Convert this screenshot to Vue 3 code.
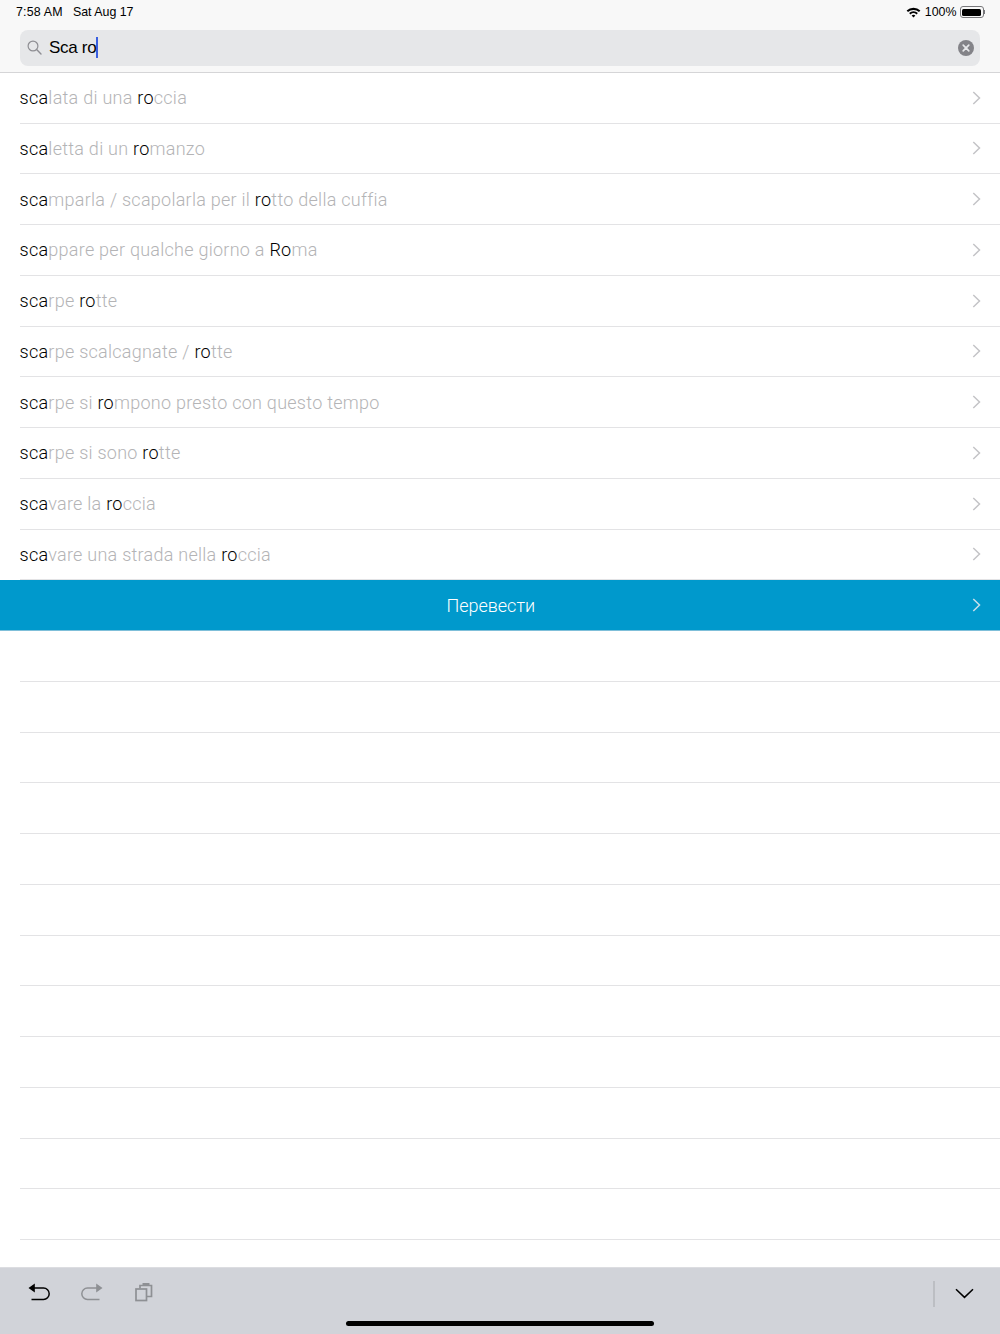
<script setup>
const rows = [
  [['sca', 1], ['lata di una ', 0], ['ro', 1], ['ccia', 0]],
  [['sca', 1], ['letta di un ', 0], ['ro', 1], ['manzo', 0]],
  [['sca', 1], ['mparla / scapolarla per il ', 0], ['ro', 1], ['tto della cuffia', 0]],
  [['sca', 1], ['ppare per qualche giorno a ', 0], ['Ro', 1], ['ma', 0]],
  [['sca', 1], ['rpe ', 0], ['ro', 1], ['tte', 0]],
  [['sca', 1], ['rpe scalcagnate / ', 0], ['ro', 1], ['tte', 0]],
  [['sca', 1], ['rpe si ', 0], ['ro', 1], ['mpono presto con questo tempo', 0]],
  [['sca', 1], ['rpe si sono ', 0], ['ro', 1], ['tte', 0]],
  [['sca', 1], ['vare la ', 0], ['ro', 1], ['ccia', 0]],
  [['sca', 1], ['vare una strada nella ', 0], ['ro', 1], ['ccia', 0]],
]
const emptyRows = 12
</script>

<template>
  <div class="screen">
    <header class="top">
      <div class="status">
        <span class="time">7:58 AM</span>
        <span class="date">Sat Aug 17</span>
        <span class="spacer"></span>
        <svg class="wifi" width="15" height="11" viewBox="0 0 15 11">
          <path d="M0.6 3.6 A10 10 0 0 1 14.4 3.6 L13 5.1 A8 8 0 0 0 2 5.1 Z" fill="#000" />
          <path d="M3.1 6.1 A6.4 6.4 0 0 1 11.9 6.1 L10.5 7.5 A4.4 4.4 0 0 0 4.5 7.5 Z" fill="#000" />
          <path d="M5.6 8.6 A2.8 2.8 0 0 1 9.4 8.6 L7.5 10.6 Z" fill="#000" />
        </svg>
        <span class="pct">100%</span>
        <span class="battery"><span class="battery-fill"></span></span>
        <span class="battery-tip"></span>
      </div>
      <div class="search">
        <svg class="glass" width="16" height="16" viewBox="0 0 16 16" fill="none" stroke="#8e8e93" stroke-width="1.2">
          <circle cx="6" cy="6" r="4.9" />
          <path d="M9.6 9.6 L14 14" stroke-linecap="round" stroke-width="1.4" />
        </svg>
        <span class="query">Sca ro</span><span class="caret"></span>
        <span class="spacer"></span>
        <svg class="clear" width="16" height="16" viewBox="0 0 16 16">
          <circle cx="8" cy="8" r="8" fill="#838388" />
          <path d="M5.2 5.2 L10.8 10.8 M10.8 5.2 L5.2 10.8" stroke="#e6e7e9" stroke-width="1.7" stroke-linecap="round" />
        </svg>
      </div>
    </header>

    <main class="list">
      <div v-for="(row, i) in rows" :key="i" class="row">
        <span class="label">
          <span v-for="(part, j) in row" :key="j" :class="part[1] ? 'hit' : 'rest'">{{ part[0] }}</span>
        </span>
        <svg class="chev" width="9" height="14" viewBox="0 0 9 14" fill="none" stroke="#c4c4c7" stroke-width="1.5">
          <path d="M1.3 1 L7.5 7 L1.3 13" />
        </svg>
      </div>
      <div class="translate">
        <span class="translate-label">Перевести</span>
        <svg class="chev" width="9" height="14" viewBox="0 0 9 14" fill="none" stroke="#c9dfea" stroke-width="1.5">
          <path d="M1.3 1 L7.5 7 L1.3 13" />
        </svg>
      </div>
      <div v-for="n in emptyRows" :key="'e' + n" class="row empty"></div>
    </main>

    <footer class="toolbar">
      <svg class="tool undo" width="24" height="22" viewBox="0 0 24 22" fill="none" stroke="#000" stroke-width="1.5">
        <path d="M4 7 H16.5 A5.7 5.7 0 0 1 16.5 18.4 H4.5" />
        <path d="M1.5 7 L7.8 2.6 V11.4 Z" fill="#000" stroke="none" />
      </svg>
      <svg class="tool redo" width="24" height="22" viewBox="0 0 24 22" fill="none" stroke="#8e9094" stroke-width="1.5">
        <path d="M20 7 H7.5 A5.7 5.7 0 0 0 7.5 18.4 H19.5" />
        <path d="M22.5 7 L16.2 2.6 V11.4 Z" fill="#8e9094" stroke="none" />
      </svg>
      <svg class="tool paste" width="20" height="20" viewBox="0 0 20 20" fill="none" stroke="#8e9094" stroke-width="1.7">
        <rect x="2" y="7" width="10.5" height="11.5" />
        <path d="M6 6.5 V3.5 H17.5 V14.5 H12.5" />
        <path d="M8.5 1 H15.5 V4 H8.5 Z" fill="#8e9094" stroke="none" />
      </svg>
      <span class="spacer"></span>
      <span class="divider"></span>
      <svg class="hide" width="19" height="11" viewBox="0 0 19 11" fill="none" stroke="#000" stroke-width="1.5">
        <path d="M1 1.2 L9.5 9.4 L18 1.2" />
      </svg>
      <span class="home"></span>
    </footer>
  </div>
</template>

<style scoped>
.screen {
  width: 1000px;
  height: 1334px;
  display: flex;
  flex-direction: column;
  overflow: hidden;
  background: #fff;
  font-family: Roboto, "Liberation Sans", sans-serif;
  color: #000;
}
.top {
  height: 72.75px;
  flex: none;
  box-sizing: border-box;
  background: #f8f8f8;
  border-bottom: 1px solid #d5d5d7;
}
.status {
  height: 24px;
  display: flex;
  align-items: center;
  padding: 0 15px 0 16px;
  font-family: "Liberation Sans", sans-serif;
  font-size: 12.4px;
}
.time { letter-spacing: 0.2px; }
.date { margin-left: 10px; }
.spacer { flex: 1; }
.wifi { margin-right: 4px; }
.battery {
  box-sizing: border-box;
  width: 24px;
  height: 12px;
  margin-left: 3px;
  padding: 1.5px;
  border: 1px solid #77777a;
  border-radius: 3px;
  display: flex;
}
.battery-fill { flex: 1; background: #000; border-radius: 1.5px; }
.battery-tip { width: 1.5px; height: 4px; background: #77777a; }
.search {
  height: 35.5px;
  margin: 6px 20px 0;
  padding: 0 6.5px 0 7px;
  display: flex;
  align-items: center;
  background: #e6e7e9;
  border-radius: 8px;
}
.query {
  margin-left: 6px;
  font-size: 17px;
  font-family: "Liberation Sans", sans-serif;
  letter-spacing: -0.3px;
}
.caret { width: 2px; height: 21px; background: #3a5fe0; }
.list { flex: 1; min-height: 0; }
.row {
  height: 50.75px;
  box-sizing: border-box;
  margin-left: 20px;
  padding-right: 19.5px;
  display: flex;
  align-items: center;
  justify-content: space-between;
  border-bottom: 1px solid #e3e3e5;
  font-size: 18px;
  font-weight: 300;
  letter-spacing: 0.26px;
}
.label { margin-left: -0.5px; }
.hit { color: #000; }
.rest { color: #b4b4b6; }
.translate {
  height: 50.75px;
  box-sizing: border-box;
  padding: 0 19.5px 0 10px;
  display: flex;
  align-items: center;
  background: #0099cc;
  border-bottom: 1px solid #7fbfd9;
  color: #fff;
  font-size: 18px;
  font-weight: 300;
}
.translate-label { flex: 1; text-align: center; }
.toolbar {
  position: relative;
  height: 67.5px;
  flex: none;
  padding: 0 26px 14px 27px;
  box-sizing: border-box;
  display: flex;
  align-items: center;
  background: #d1d3d9;
  border-top: 1px solid #dcdde1;
}
.tool { margin-bottom: 3px; }
.redo { margin-left: 29px; }
.paste { margin-left: 30px; }
.divider { width: 2px; height: 26px; background: #bcbec3; margin-right: 20px; }
.home {
  position: absolute;
  left: 346px;
  bottom: 8px;
  width: 308px;
  height: 5px;
  border-radius: 3px;
  background: #000;
}
</style>
